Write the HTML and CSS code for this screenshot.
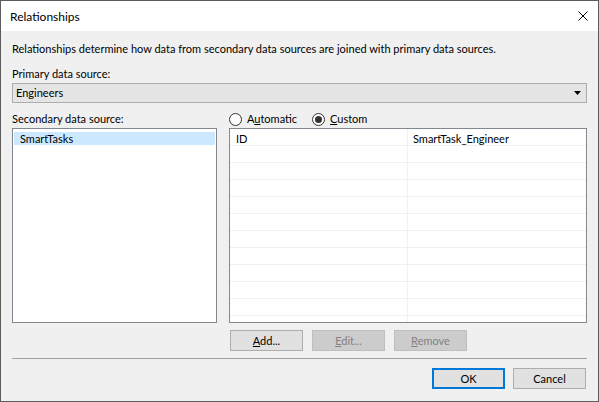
FILE: index.html
```html
<!DOCTYPE html>
<html>
<head>
<meta charset="utf-8">
<title>Relationships</title>
<link rel="stylesheet" href="styles.css">
</head>
<body>
<div class="window">
  <div class="titlebar">
    <span class="title">Relationships</span>
    <svg class="close" width="10" height="10" viewBox="0 0 10 10"><path d="M0.5 0.5L9.5 9.5M9.5 0.5L0.5 9.5" stroke="#000" stroke-width="1"/></svg>
  </div>
  <div class="content">
    <p class="desc">Relationships determine how data from secondary data sources are joined with primary data sources.</p>
    <div class="label">Primary data source:</div>
    <div class="combo">
      <span class="combo-text">Engineers</span>
      <svg class="arrow" width="7" height="4" viewBox="0 0 7 4"><path d="M0 0H7L3.5 4Z" fill="#000"/></svg>
    </div>
    <div class="split">
      <div class="left">
        <div class="label">Secondary data source:</div>
        <div class="list">
          <div class="item selected">SmartTasks</div>
        </div>
      </div>
      <div class="right">
        <div class="radios">
          <label class="radio first"><span class="circle"></span><span>A<u>u</u>tomatic</span></label>
          <label class="radio"><span class="circle checked"></span><span><u>C</u>ustom</span></label>
        </div>
        <div class="grid">
          <div class="col col1">
            <div class="cell">ID</div>
            <div class="cell"></div><div class="cell"></div><div class="cell"></div><div class="cell"></div><div class="cell"></div>
            <div class="cell"></div><div class="cell"></div><div class="cell"></div><div class="cell"></div><div class="cell"></div>
          </div>
          <div class="col col2">
            <div class="cell">SmartTask_Engineer</div>
            <div class="cell"></div><div class="cell"></div><div class="cell"></div><div class="cell"></div><div class="cell"></div>
            <div class="cell"></div><div class="cell"></div><div class="cell"></div><div class="cell"></div><div class="cell"></div>
          </div>
        </div>
        <div class="actions">
          <button class="btn"><u>A</u>dd...</button>
          <button class="btn disabled"><u>E</u>dit...</button>
          <button class="btn disabled"><u>R</u>emove</button>
        </div>
      </div>
    </div>
    <div class="sep"></div>
    <div class="footer">
      <button class="btn default">OK</button>
      <button class="btn">Cancel</button>
    </div>
  </div>
</div>
</body>
</html>
```
FILE: styles.css
```css
* { box-sizing: border-box; }
html, body { margin: 0; padding: 0; }
body {
  font-family: Lato, "Liberation Sans", sans-serif;
  font-size: 11px;
  line-height: 16px;
  color: #000;
  background: #f0f0f0;
}
.window {
  width: 599px;
  height: 402px;
  border: 1px solid #5c5c5c;
  background: #f0f0f0;
  display: flex;
  flex-direction: column;
}
.titlebar {
  height: 30px;
  background: #fff;
  display: flex;
  align-items: center;
  justify-content: space-between;
  padding: 0 10px 0 9px;
}
.title { margin-top: 1px; font-size: 12px; }
.close { display: block; }
.content {
  padding: 0 11px;
}
.desc {
  margin: 10px 0 0;
}
.label { height: 16px; white-space: nowrap; }
.desc + .label { margin-top: 9px; }
.combo {
  margin-top: 1px;
  height: 20px;
  border: 1px solid #adadad;
  background: #e5e5e5;
  display: flex;
  align-items: flex-start;
  justify-content: space-between;
  padding: 0 5px 0 3px;
}
.combo-text { line-height: 18px; }
.arrow { display: block; margin-top: 7px; }
.split {
  margin-top: 8px;
  display: flex;
  gap: 12px;
  align-items: flex-start;
}
.left { width: 205px; }
.list {
  margin-top: 1px;
  height: 195px;
  border: 1px solid #828790;
  background: #fff;
  padding: 3px 1px 0 1px;
}
.item {
  height: 13px;
  line-height: 13px;
  padding-left: 6px;
}
.item.selected { background: #cce8ff; }
.right { width: 358px; }
.radios {
  height: 16px;
  display: flex;
  align-items: center;
}
.radio {
  display: flex;
  align-items: center;
  gap: 5px;
}
.radio.first { width: 83px; }
.circle {
  width: 13px;
  height: 13px;
  border: 1px solid #333;
  border-radius: 50%;
  background: #fff;
  display: flex;
  align-items: center;
  justify-content: center;
}
.circle.checked::after {
  content: "";
  width: 7px;
  height: 7px;
  border-radius: 50%;
  background: #333;
}
.grid {
  margin-top: 1px;
  height: 195px;
  border: 1px solid #828790;
  background: #fff;
  display: flex;
}
.col { height: 100%; }
.col1 { width: 178px; border-right: 1px solid #f0f0f0; }
.col2 { flex: 1; }
.cell {
  height: 17px;
  border-bottom: 1px solid #f0f0f0;
  line-height: 20px;
  padding-left: 6px;
  white-space: nowrap;
}
.col2 .cell { padding-left: 5px; }
.actions {
  margin-top: 7px;
  padding-left: 1px;
  display: flex;
  gap: 9px;
}
.btn {
  width: 73px;
  height: 21px;
  padding: 0;
  border: 1px solid #adadad;
  background: #e1e1e1;
  font: inherit;
  line-height: 16px;
  color: #000;
  text-align: center;
}
.btn.disabled {
  background: #cccccc;
  border-color: #bfbfbf;
  color: #838383;
}
.btn.default { border: 2px solid #0078d7; }
.sep {
  margin-top: 7px;
  height: 1px;
  background: #a0a0a0;
}
.footer {
  margin-top: 9px;
  display: flex;
  justify-content: flex-end;
  gap: 8px;
  padding-right: 1px;
}
```
